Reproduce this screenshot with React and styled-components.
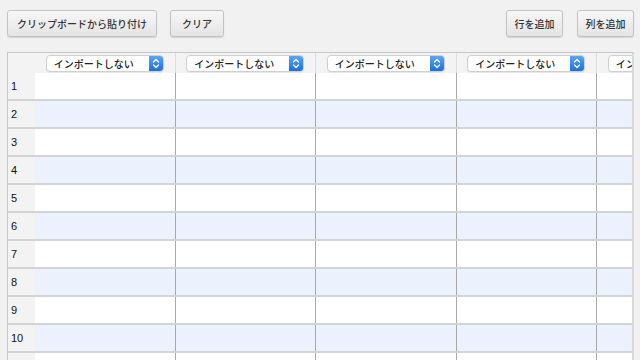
import React from "react";
import styled, { createGlobalStyle } from "styled-components";

const Global = createGlobalStyle`
  html, body { margin: 0; padding: 0; background: #f1f1f1; overflow: hidden; }
  body { font-family: "Liberation Sans", "Noto Sans CJK JP", sans-serif; color: #222; }
`;

const Page = styled.div`
  padding: 10px 6px 0 7px;
  height: 360px;
  box-sizing: border-box;
  display: flex;
  flex-direction: column;
`;

const Toolbar = styled.div`
  display: flex;
  justify-content: space-between;
  align-items: center;
  height: 27px;
`;

const Group = styled.div`
  display: flex;
  gap: ${(p) => p.$gap}px;
`;

const Button = styled.button`
  height: 27px;
  width: ${(p) => p.$w}px;
  padding: 0;
  font-family: "Noto Sans CJK JP", sans-serif;
  font-size: 10px;
  font-weight: 500;
  color: #333;
  background: linear-gradient(#f7f7f7, #e4e4e4);
  border: 1px solid #c2c2c2;
  border-radius: 3px;
  box-shadow: 0 1px 1px rgba(0, 0, 0, 0.12);
`;

const Sheet = styled.div`
  margin-top: 15px;
  width: 627px;
  flex: 1;
  box-sizing: border-box;
  border-left: 1px solid #c8c8c8;
  border-top: 1px solid #c8c8c8;
  border-right: 2px solid #d9d9d9;
  overflow: hidden;
  background: #fff;
`;

const HeaderRow = styled.div`
  display: flex;
  height: 20px;
  background: #f3f3f3;
  white-space: nowrap;
`;

const Corner = styled.div`
  flex: 0 0 27px;
`;

const HeaderCell = styled.div`
  flex: 0 0 140.5px;
  box-sizing: border-box;
  border-right: 1px solid #dedede;
  display: flex;
  align-items: center;
  justify-content: center;
  overflow: hidden;
`;

const Select = styled.div`
  width: 118px;
  height: 17px;
  box-sizing: border-box;
  display: flex;
  align-items: stretch;
  background: #fff;
  border: 1px solid #cfcfcf;
  border-radius: 4px;
  overflow: hidden;
  box-shadow: 0 1px 1px rgba(0, 0, 0, 0.06);
`;

const SelectLabel = styled.span`
  flex: 1;
  font-size: 10px;
  line-height: 15px;
  padding-left: 7px;
  color: #222;
  font-family: "Noto Sans CJK JP", sans-serif;
  font-weight: 500;
`;

const Stepper = styled.span`
  flex: 0 0 14px;
  background: linear-gradient(#5aa6f7, #1c6ee3);
  display: flex;
  align-items: center;
  justify-content: center;
`;

const Row = styled.div`
  display: flex;
  height: 28px;
  box-sizing: border-box;
  border-bottom: 2px solid #d3d3d3;
  background: ${(p) => (p.$alt ? "#ecf2fd" : "#ffffff")};
  white-space: nowrap;
`;

const RowNum = styled.div`
  flex: 0 0 27px;
  background: #f3f3f3;
  font-size: 11px;
  padding-left: 3px;
  box-sizing: border-box;
  display: flex;
  align-items: center;
  color: #111;
`;

const Cell = styled.div`
  flex: 0 0 140.5px;
  box-sizing: border-box;
  border-right: 1px solid #a9a9a9;
`;

const Chevrons = () => (
  <svg width="8" height="11" viewBox="0 0 8 11">
    <path d="M1.5 4 L4 1.5 L6.5 4 M1.5 7 L4 9.5 L6.5 7" fill="none" stroke="#fff" strokeWidth="1.3" strokeLinecap="round" strokeLinejoin="round" />
  </svg>
);

const COLS = 5;
const ROWS = 11;

export default function App() {
  return (
    <>
      <Global />
      <Page>
        <Toolbar>
          <Group $gap={13}>
            <Button $w={150}>クリップボードから貼り付け</Button>
            <Button $w={54}>クリア</Button>
          </Group>
          <Group $gap={14}>
            <Button $w={57}>行を追加</Button>
            <Button $w={57}>列を追加</Button>
          </Group>
        </Toolbar>
        <Sheet>
          <HeaderRow>
            <Corner />
            {Array.from({ length: COLS }).map((_, i) => (
              <HeaderCell key={i}>
                <Select>
                  <SelectLabel>インポートしない</SelectLabel>
                  <Stepper>
                    <Chevrons />
                  </Stepper>
                </Select>
              </HeaderCell>
            ))}
          </HeaderRow>
          {Array.from({ length: ROWS }).map((_, r) => (
            <Row key={r} $alt={r % 2 === 1}>
              <RowNum>{r < 10 ? r + 1 : ""}</RowNum>
              {Array.from({ length: COLS }).map((_, c) => (
                <Cell key={c} />
              ))}
            </Row>
          ))}
        </Sheet>
      </Page>
    </>
  );
}
